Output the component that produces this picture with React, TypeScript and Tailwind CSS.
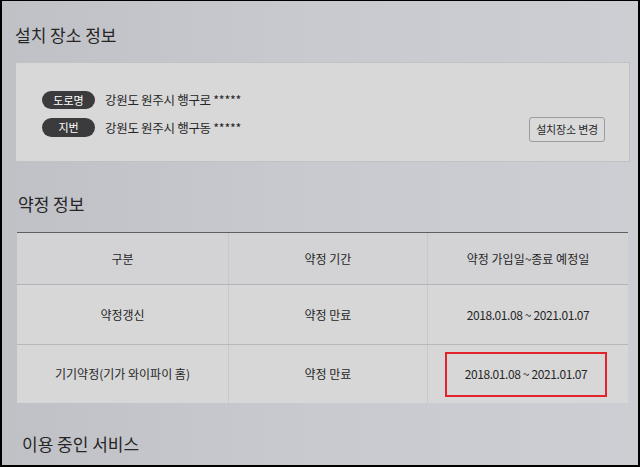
import React from 'react';

const font = { fontFamily: '"Noto Sans CJK KR", "Noto Sans", sans-serif' };

const rows = [
  { kind: '약정갱신', period: '약정 만료', range: '2018.01.08 ~ 2021.01.07', mark: false, h: 'h-[60px]' },
  { kind: '기기약정(기가 와이파이 홈)', period: '약정 만료', range: '2018.01.08 ~ 2021.01.07', mark: true, h: 'h-[58px]' },
];

const App: React.FC = () => {
  return (
    <div className="w-[640px] h-[467px] bg-black pt-[1px] px-[2px] pb-[2px]" style={font}>
      <div className="h-full overflow-hidden bg-gradient-to-r from-[#c0c1c6] via-[#c9cacf] to-[#cdced3] text-[#262626]">
        {/* 설치 장소 정보 */}
        <h2 className="pl-[13px] pt-[22px] text-[17px] leading-[24px]">설치 장소 정보</h2>

        <div className="mt-[15px] ml-[13px] mr-[8px] h-[100px] flex justify-between bg-[#d8d8d9] border border-[#c2c2c4]">
          <div className="pl-[26px] pt-[28px] flex flex-col gap-[9px]">
            <div className="flex items-center gap-[10px]">
              <span className="w-[53px] h-[18px] rounded-full bg-[#3b3b3d] text-white text-[11px] leading-[18px] text-center">도로명</span>
              <span className="text-[12.5px] leading-[18px] tracking-[-0.3px]">강원도 원주시 행구로 *****</span>
            </div>
            <div className="flex items-center gap-[10px]">
              <span className="w-[53px] h-[19px] rounded-full bg-[#3b3b3d] text-white text-[11px] leading-[19px] text-center">지번</span>
              <span className="text-[12.5px] leading-[19px] tracking-[-0.3px]">강원도 원주시 행구동 *****</span>
            </div>
          </div>
          <div className="self-end mb-[19px] mr-[24px]">
            <button className="h-[25px] px-[6px] rounded-[3px] border border-[#9c9c9e] bg-[#dadadb] text-[11px] text-[#2a2a2a] tracking-[-0.2px]">
              설치장소 변경
            </button>
          </div>
        </div>

        {/* 약정 정보 */}
        <h2 className="mt-[30px] pl-[16px] text-[17px] leading-[24px]">약정 정보</h2>

        <div className="mt-[16px] ml-[15px] mr-[10px] border-t border-[#5f5f61] text-[12px]">
          <div className="h-[52px] grid grid-cols-[211px_199px_1fr] bg-[#d3d3d5] border-b border-[#b3b3b5]">
            <div className="flex items-center justify-center">구분</div>
            <div className="flex items-center justify-center border-l border-[#c8c8ca]">약정 기간</div>
            <div className="flex items-center justify-center border-l border-[#c8c8ca]">약정 가입일~종료 예정일</div>
          </div>
          {rows.map((r, i) => (
            <div
              key={i}
              className={`${r.h} grid grid-cols-[211px_199px_1fr] bg-[#d7d7d8] ${i === 0 ? 'border-b border-[#b8b8ba]' : ''}`}
            >
              <div className="flex items-center justify-center">{r.kind}</div>
              <div className="flex items-center justify-center border-l border-[#c8c8ca]">{r.period}</div>
              <div className="flex items-center justify-center border-l border-[#c8c8ca]">
                {r.mark ? (
                  <div className="w-[162px] h-[45px] mr-[4px] flex items-center justify-center border-2 border-[#e3232a] text-[12px] tracking-[-0.4px]">
                    {r.range}
                  </div>
                ) : (
                  <span className="text-[12px] tracking-[-0.4px]">{r.range}</span>
                )}
              </div>
            </div>
          ))}
        </div>

        {/* 이용 중인 서비스 */}
        <h2 className="mt-[29px] pl-[20px] text-[17px] leading-[24px]">이용 중인 서비스</h2>
      </div>
    </div>
  );
};

export default App;
